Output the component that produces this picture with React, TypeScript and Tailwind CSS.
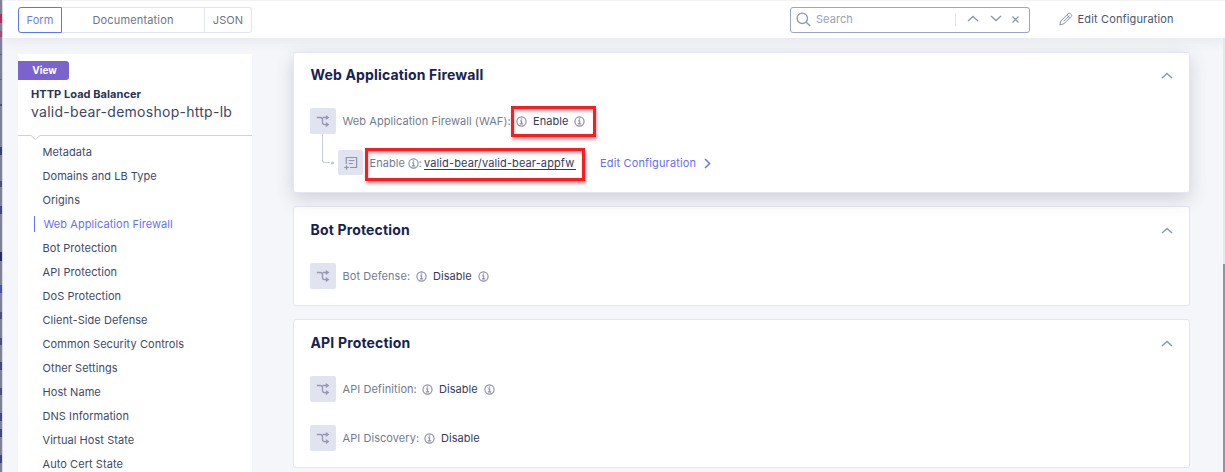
import React from "react";

const NAV = [
  { label: "Metadata" },
  { label: "Domains and LB Type" },
  { label: "Origins" },
  { label: "Web Application Firewall", active: true },
  { label: "Bot Protection" },
  { label: "API Protection" },
  { label: "DoS Protection" },
  { label: "Client-Side Defense" },
  { label: "Common Security Controls" },
  { label: "Other Settings" },
  { label: "Host Name" },
  { label: "DNS Information" },
  { label: "Virtual Host State" },
  { label: "Auto Cert State" },
];

const MARKS = [
  { y: 14, h: 9, c: "bg-[#b0305c]" },
  { y: 31, h: 6, c: "bg-[#a8486c]" },
  { y: 54, h: 1, c: "bg-[#5f6684]" },
  { y: 79, h: 1, c: "bg-[#5f6684]" },
  { y: 104, h: 2, c: "bg-[#4a4f78]" },
  { y: 147, h: 8, c: "bg-[#384070]" },
  { y: 181, h: 6, c: "bg-[#4c4f78]" },
  { y: 206, h: 8, c: "bg-[#414878]" },
  { y: 252, h: 9, c: "bg-[#262c60]" },
  { y: 285, h: 8, c: "bg-[#4350b0]" },
  { y: 312, h: 7, c: "bg-[#4c4f78]" },
  { y: 338, h: 7, c: "bg-[#4c4f78]" },
  { y: 362, h: 8, c: "bg-[#414878]" },
  { y: 388, h: 7, c: "bg-[#4c4f78]" },
  { y: 413, h: 8, c: "bg-[#414878]" },
  { y: 429, h: 8, c: "bg-[#414878]" },
  { y: 455, h: 8, c: "bg-[#414878]" },
];

function Info() {
  return (
    <svg className="h-[11px] w-[11px] shrink-0" viewBox="0 0 11 11" fill="none" stroke="#8b8fa8">
      <circle cx="5.5" cy="5.5" r="4.6" strokeWidth="1.15" />
      <path d="M4.2 4.9H5.6V7.8M3.8 7.9H7.2" strokeWidth="1.1" />
      <path d="M4.8 3H6.2" strokeWidth="1.3" />
    </svg>
  );
}

function Chevron({ down = false, className = "" }: { down?: boolean; className?: string }) {
  return (
    <svg className={`h-[7px] w-[12px] shrink-0 ${className}`} viewBox="0 0 12 7" fill="none" stroke="#8f9aae" strokeWidth="1.5">
      <path d={down ? "M1 1L6 5.5L11 1" : "M1 6L6 1.5L11 6"} />
    </svg>
  );
}

function BranchTile() {
  return (
    <div className="flex h-[26px] w-[26px] shrink-0 items-center justify-center rounded-[2px] bg-[#e1e3f0]">
      <svg className="h-[14px] w-[14px]" viewBox="0 0 14 14" fill="none" stroke="#9799b0" strokeWidth="1.3">
        <path d="M0.8 3.5H4.3Q6.5 3.5 6.5 5.7V8.5Q6.5 10.6 8.6 10.6H12M6.8 3.5H12" />
        <path d="M9.8 0.9L13.4 3.5L9.8 6.1ZM9.8 8L13.4 10.6L9.8 13.2Z" fill="#9799b0" stroke="none" />
      </svg>
    </div>
  );
}

function ListTile() {
  return (
    <div className="flex h-[25px] w-[25px] shrink-0 items-center justify-center rounded-[2px] bg-[#e1e3f0]">
      <svg className="h-[14px] w-[14px]" viewBox="0 0 14 14" fill="none" stroke="#8f93ac" strokeWidth="1.2">
        <path d="M2.3 8V1.5H12.6V11.5H6M4.7 4.5H10.4M4.7 7.5H8.8M0.2 11.5H4.8M2.5 9.2V13.8" />
      </svg>
    </div>
  );
}

function CardTitle({ children }: { children: React.ReactNode }) {
  return (
    <div className="flex h-[18px] items-center justify-between pr-[16px] pl-[16.5px]">
      <h2 className="text-[14px] leading-[18px] font-bold tracking-[0.16px] whitespace-nowrap text-[#182250]">{children}</h2>
      <Chevron />
    </div>
  );
}

function Option({ label, labelWidth, value, trailing = true }: { label: string; labelWidth: string; value: string; trailing?: boolean }) {
  return (
    <div className="flex h-[26px] items-center pl-[16px] whitespace-nowrap">
      <BranchTile />
      <span className={`ml-[6.5px] ${labelWidth} text-[#747b90]`}>{label}</span>
      <Info />
      <span className="ml-[6px] w-[45px] text-[#343a5c]">{value}</span>
      {trailing && <Info />}
    </div>
  );
}

export default function App() {
  return (
    <div className="relative flex h-[472px] w-full overflow-hidden bg-[#f5f6f9] font-['Inter',sans-serif] text-[11px] tracking-[0.06px] text-[#3c4563]">
      <div className="relative w-[2px] shrink-0 overflow-hidden bg-[#7f8199]">
        {MARKS.map((m) => (
          <span key={m.y} className={`absolute left-0 w-[2px] ${m.c}`} style={{ top: m.y, height: m.h }} />
        ))}
      </div>
      <div className="flex min-w-0 flex-1 flex-col border-l border-[#d9dbe3]">
        <header className="flex h-[38px] shrink-0 items-center border-t border-[#f3f3f5] bg-white pl-[15px] shadow-[0_2px_14px_rgba(70,80,110,0.10)]">
          <div className="flex h-[26px] w-[234px] leading-[24px] text-[#6e7587]">
            <button className="w-[44px] rounded-l-[3px] border border-[#5a76f2] text-[#6f7cf7]">Form</button>
            <button className="w-[143px] border-y border-r border-[#e2e5f0] tracking-[0.16px]">Documentation</button>
            <button className="flex-1 rounded-r-[3px] border-y border-r border-[#e2e5f0]">JSON</button>
          </div>
          <div className="ml-[538px] flex h-[26px] w-[240px] items-center rounded-[3px] border border-[#9ba7bc] bg-white">
            <svg className="ml-[5px] h-[15px] w-[15px]" viewBox="0 0 15 15" fill="none" stroke="#8f9bae" strokeWidth="1.4">
              <circle cx="6.3" cy="6.3" r="5.2" />
              <path d="M10.2 10.2L14.2 14" />
            </svg>
            <span className="ml-[5px] w-[139px] text-[#98a1b0]">Search</span>
            <span className="h-[13px] w-px bg-[#dfe4ee]" />
            <Chevron className="-mt-[2px] ml-[11px]" />
            <Chevron down className="-mt-[2px] ml-[11px]" />
            <svg className="ml-[10px] h-[7px] w-[7px]" viewBox="0 0 7 7" stroke="#8f9aae" strokeWidth="1.3">
              <path d="M0.5 0.5L6.5 6.5M6.5 0.5L0.5 6.5" />
            </svg>
          </div>
          <div className="ml-[29px] flex items-center">
            <svg className="-mt-[2px] h-[14px] w-[14px]" viewBox="0 0 14 14" fill="none" stroke="#8791a6" strokeWidth="1" strokeLinejoin="round">
              <path d="M0.8 12.9L2 8.8L9.4 1.5Q10.3 0.6 11.2 1.5L12.4 2.7Q13.2 3.6 12.4 4.4L5 11.7ZM7.8 3.1L10.8 6.1M10.2 3.7L4.6 9.3" />
            </svg>
            <span className="ml-[4.5px] tracking-[0.15px] whitespace-nowrap text-[#4b5574]">Edit Configuration</span>
          </div>
        </header>

        <div className="flex flex-1">
          <aside className="mt-[16px] ml-[15px] h-[420px] w-[234px] shrink-0 bg-white pt-[7px]">
            <div className="h-[19px] w-[51px] rounded-r-[3px] bg-[#7b63cd] pl-[2px] text-center text-[10px] leading-[18px] font-bold text-white">View</div>
            <div className="mt-[7px] ml-[13px] text-[11px] leading-[14px] font-bold text-[#2a3358]">HTTP Load Balancer</div>
            <div className="mt-[2px] ml-[13px] text-[14px] leading-[18px] tracking-[0.27px] whitespace-nowrap text-[#3d4767]">valid-bear-demoshop-http-lb</div>
            <svg className="mt-[13px] block h-[7px] w-[234px]" viewBox="0 0 234 7" fill="none" stroke="#cdd1e0">
              <path d="M0 1.5H13L17.5 5.5L22 1.5H234" />
            </svg>
            <nav className="-mt-px">
              {NAV.map((n) => (
                <div key={n.label} className="flex h-[24px] items-center pl-[16px]">
                  <span
                    className={
                      n.active
                        ? "flex h-[16px] items-center border-l border-[#5f74f5] pl-[8.5px] whitespace-nowrap text-[#6672f6]"
                        : "flex h-[16px] items-center pl-[8.5px] whitespace-nowrap text-[#414a67]"
                    }
                  >
                    {n.label}
                  </span>
                </div>
              ))}
            </nav>
          </aside>

          <main className="mt-[14px] ml-[41px] flex w-[897px] shrink-0 flex-col">
            <section className="relative z-10 h-[141px] shrink-0 rounded-[3px] border border-[#e3e6f1] bg-white pt-[13px] shadow-[0_6px_18px_rgba(60,65,100,0.20)]">
              <CardTitle>Web Application Firewall</CardTitle>
              <div className="mt-[24px] flex h-[26px] items-center pl-[16px] whitespace-nowrap">
                <BranchTile />
                <span className="ml-[6.5px] w-[168.5px] text-[#747b90]">Web Application Firewall (WAF):</span>
                <div className="flex h-[31px] w-[85px] items-center border-[3px] border-[#fb1c22] pl-[2px] shadow-[1px_3px_3px_rgba(0,0,0,0.3),inset_1px_3px_3px_rgba(0,0,0,0.22)]">
                  <Info />
                  <span className="ml-[6px] w-[41px] text-[#343a5c]">Enable</span>
                  <Info />
                </div>
              </div>
              <div className="mt-[12px] flex h-[34px] pl-[28px] whitespace-nowrap">
                <svg className="-mt-[12px] h-[34px] w-[16px] shrink-0" viewBox="0 0 16 34" fill="none" stroke="#c9cde0" strokeWidth="1.1">
                  <path d="M0.5 0V26Q0.5 28.5 3 28.5H7.5" />
                  <circle cx="10.5" cy="29" r="1.6" fill="#c3c7dc" stroke="none" />
                </svg>
                <div className="mt-[4px]">
                  <ListTile />
                </div>
                <div className="mt-[2px] ml-[2px] flex h-[33px] w-[220px] shrink-0 items-center border-[3px] border-[#fb1c22] pb-[2px] pl-[1.5px] shadow-[1px_3px_3px_rgba(0,0,0,0.3),inset_1px_3px_3px_rgba(0,0,0,0.22)]">
                  <span className="w-[38px] text-[#747b90]">Enable</span>
                  <Info />
                  <span className="w-[5.5px] text-[#747b90]">:</span>
                  <span className="h-[13px] w-[152px] border-b border-[#343a5c] leading-[13px] tracking-[0.12px] text-[#343a5c]">valid-bear/valid-bear-appfw</span>
                </div>
                <div className="mt-[5px] ml-[15px] flex h-[25px] items-center text-[#6470f5]">
                  <span className="w-[104px] tracking-[0.15px]">Edit Configuration</span>
                  <svg className="h-[11px] w-[7px]" viewBox="0 0 7 11" fill="none" stroke="#6672f6" strokeWidth="1.5">
                    <path d="M1 1L5.6 5.5L1 10" />
                  </svg>
                </div>
              </div>
            </section>

            <section className="mt-[13px] h-[100px] shrink-0 rounded-[3px] border border-[#e3e6f1] bg-white pt-[14px]">
              <CardTitle>Bot Protection</CardTitle>
              <div className="mt-[24px]">
                <Option label="Bot Defense:" labelWidth="w-[73.5px]" value="Disable" />
              </div>
            </section>

            <section className="mt-[13px] h-[149px] shrink-0 rounded-[3px] border border-[#e3e6f1] bg-white pt-[14px]">
              <CardTitle>API Protection</CardTitle>
              <div className="mt-[24px] flex flex-col gap-[23px]">
                <Option label="API Definition:" labelWidth="w-[79.5px]" value="Disable" />
                <Option label="API Discovery:" labelWidth="w-[81.5px]" value="Disable" trailing={false} />
              </div>
            </section>
          </main>
        </div>
      </div>
      <div className="absolute top-[38px] right-0 flex h-[434px] w-[2px] flex-col bg-[#e6e8f0]">
        <span className="mt-[226px] flex-1 bg-[#8f94ab]" />
      </div>
    </div>
  );
}
